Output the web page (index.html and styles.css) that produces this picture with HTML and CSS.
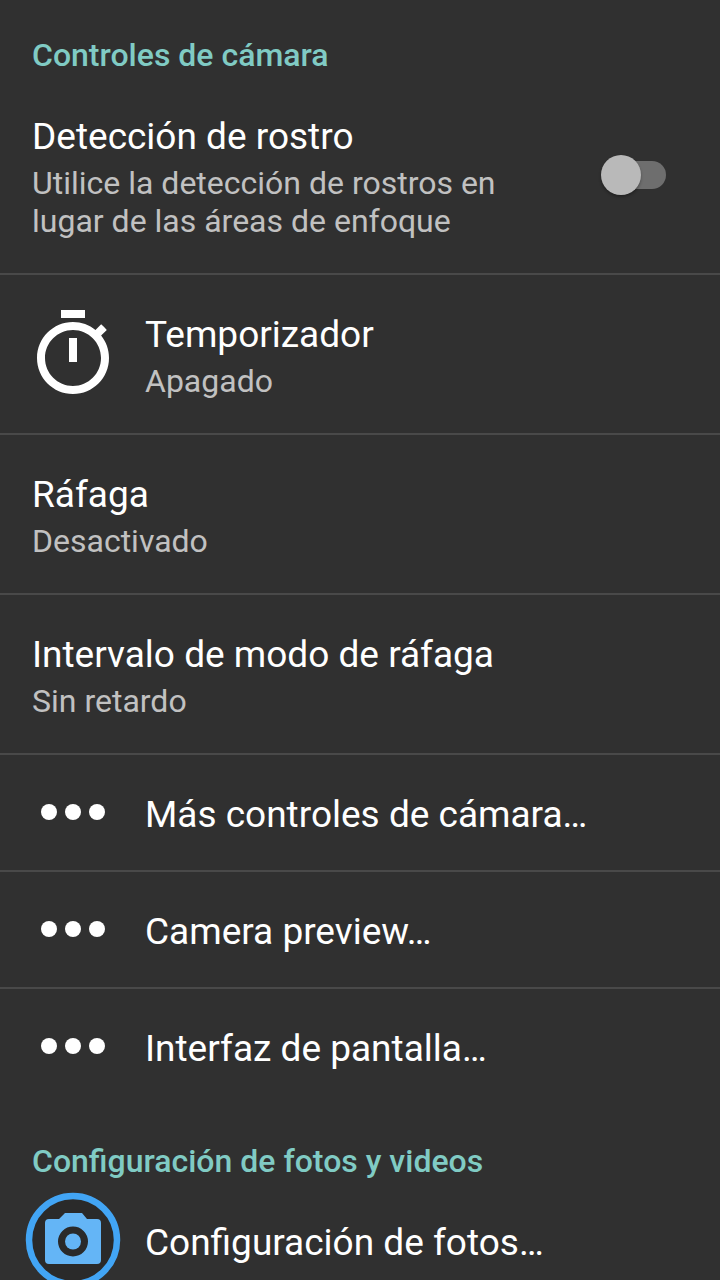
FILE: index.html
```html
<!DOCTYPE html>
<html lang="es">
<head>
<meta charset="utf-8">
<meta name="viewport" content="width=device-width, initial-scale=1">
<title>Controles de cámara</title>
<link rel="stylesheet" href="styles.css">
</head>
<body>
<svg class="defs" aria-hidden="true">
  <symbol id="more" viewBox="0 0 24 24"><circle cx="6" cy="12" r="2"/><circle cx="12" cy="12" r="2"/><circle cx="18" cy="12" r="2"/></symbol>
</svg>
<main>
  <section>
    <h2 class="heading">Controles de cámara</h2>
    <label class="row" for="faces">
      <span class="text">
        <span class="title">Detección de rostro</span>
        <span class="summary">Utilice la detección de rostros en lugar de las áreas de enfoque</span>
      </span>
      <input class="switch" id="faces" type="checkbox" role="switch">
    </label>
    <button class="row row-icon" type="button">
      <svg class="icon" viewBox="0 0 24 24" aria-hidden="true"><path d="M15 1H9v2h6V1zm-4 13h2V8h-2v6zm8.030-6.610l1.420-1.420c-.43-.51-.9-.99-1.410-1.410l-1.420 1.420C16.070 4.740 14.120 4 12 4c-4.970 0-9 4.030-9 9s4.020 9 9 9 9-4.030 9-9c0-2.120-.74-4.070-1.970-5.610zM12 20c-3.870 0-7-3.130-7-7s3.130-7 7-7 7 3.130 7 7-3.130 7-7 7z"/></svg>
      <span class="text">
        <span class="title">Temporizador</span>
        <span class="summary">Apagado</span>
      </span>
    </button>
    <button class="row" type="button">
      <span class="text">
        <span class="title">Ráfaga</span>
        <span class="summary">Desactivado</span>
      </span>
    </button>
    <button class="row" type="button">
      <span class="text">
        <span class="title">Intervalo de modo de ráfaga</span>
        <span class="summary">Sin retardo</span>
      </span>
    </button>
    <button class="row row-icon row-single" type="button">
      <svg class="icon" aria-hidden="true"><use href="#more"/></svg>
      <span class="text"><span class="title">Más controles de cámara…</span></span>
    </button>
    <button class="row row-icon row-single" type="button">
      <svg class="icon" aria-hidden="true"><use href="#more"/></svg>
      <span class="text"><span class="title">Camera preview…</span></span>
    </button>
    <button class="row row-icon row-single" type="button">
      <svg class="icon" aria-hidden="true"><use href="#more"/></svg>
      <span class="text"><span class="title">Interfaz de pantalla…</span></span>
    </button>
  </section>
  <section>
    <h2 class="heading">Configuración de fotos y videos</h2>
    <button class="row row-icon row-single" type="button">
      <svg class="icon" viewBox="0 0 96 96" aria-hidden="true">
        <circle class="ring" cx="48" cy="48" r="44"/>
        <path class="camera" fill-rule="evenodd" d="M40 21h17l5 6h10q4 0 4 4v37q0 4-4 4H24q-4 0-4-4V31q0-4 4-4h10zM48 34.500a15 15 0 1 0 0 30a15 15 0 1 0 0-30z"/>
        <circle class="camera" cx="48" cy="49.500" r="8"/>
      </svg>
      <span class="text"><span class="title">Configuración de fotos…</span></span>
    </button>
  </section>
</main>
</body>
</html>
```

FILE: styles.css
```css
* {
  box-sizing: border-box;
}

html {
  background: #303030;
  scrollbar-width: none;
}

body {
  margin: 0;
  color: #fff;
  font-family: Roboto, "Noto Sans", sans-serif;
}

.defs {
  display: none;
}

.heading {
  margin: 0;
  padding: 36px 32px 3px;
  color: #80cbc4;
  font-size: 32px;
  font-weight: 500;
  line-height: 38px;
}

.row {
  display: flex;
  align-items: center;
  gap: 32px;
  width: 100%;
  margin: 0;
  padding: 0 32px;
  border: 0;
  border-bottom: 2px solid #494949;
  background: none;
  color: inherit;
  font: inherit;
  text-align: left;
  cursor: pointer;
}

.row:last-child {
  border-color: transparent;
}

.row-icon {
  gap: 24px;
  padding-left: 25px;
}

.text {
  display: flex;
  flex: 1;
  flex-direction: column;
  gap: 5px;
  padding: 38px 0 33px;
}

.title {
  font-size: 37px;
  line-height: 44px;
}

.summary {
  color: #c1c1c1;
  font-size: 32px;
  line-height: 38px;
}

.icon {
  flex: none;
  width: 96px;
  height: 96px;
  fill: #fff;
}

.row-single .icon {
  margin-bottom: 1px;
}

.ring {
  fill: #2a2a2a;
  stroke: #42a5f5;
  stroke-width: 6.500;
}

.camera {
  fill: #64b5f6;
}

.switch {
  display: flex;
  flex: none;
  align-items: center;
  appearance: none;
  width: 65px;
  height: 40px;
  margin: 0 22px 0 0;
  border-radius: 20px;
  isolation: isolate;
  cursor: pointer;
}

.switch::before {
  content: "";
  flex: none;
  width: 40px;
  height: 40px;
  border-radius: 50%;
  background: #b9b9b9;
  box-shadow: 0 2px 3px rgb(0 0 0 / 30%);
}

.switch::after {
  content: "";
  z-index: -1;
  flex: none;
  width: 60px;
  height: 28px;
  margin-left: -35px;
  border-radius: 14px;
  background: #6e6e6e;
}

.switch:checked {
  flex-direction: row-reverse;
}

.switch:checked::before {
  background: #80cbc4;
}

.switch:checked::after {
  margin: 0 -35px 0 0;
}
```
